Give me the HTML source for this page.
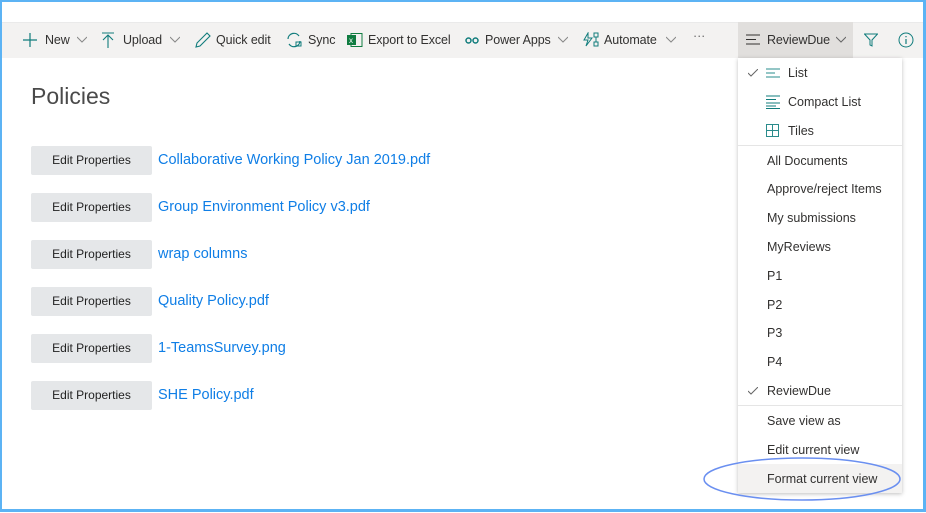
<!DOCTYPE html>
<html><head><meta charset="utf-8"><style>
*{margin:0;padding:0;box-sizing:border-box}
body{width:926px;height:513px;overflow:hidden;background:#fff;font-family:"Segoe UI","Liberation Sans",sans-serif;position:relative;color:#323130}
.frame{position:absolute;left:0;top:0;width:926px;height:512px;border:2px solid #5cb3f4;border-right-width:3px;border-bottom-width:3px}
.tb{position:absolute;left:2px;top:22px;width:921px;height:36px;background:#f3f2f1;border-top:1px solid #eaeaea}
.t{position:absolute;top:33px;font-size:12.5px;color:#323130;white-space:nowrap;letter-spacing:-0.1px}
.ic{position:absolute}
h1{position:absolute;left:31px;top:83px;font-size:23px;font-weight:300;color:#4a4a4a}
.btn{position:absolute;left:31px;width:121px;height:29px;background:#e5e7e9;border-radius:2px;font-size:12px;color:#222;text-align:center;line-height:29px}
.lnk{position:absolute;left:158px;font-size:14.5px;color:#0f7ee6;line-height:29px}
.menu{position:absolute;left:738px;top:58px;width:164px;height:435px;background:#fff;box-shadow:0 1px 4px rgba(0,0,0,.25);}
.mi{position:absolute;left:29px;font-size:12.5px;color:#323130;white-space:nowrap;margin-top:1px}
.div{position:absolute;left:0;width:164px;height:1px;background:#e5e5e5}
</style></head><body>
<div class="tb"></div>
<div style="position:absolute;left:738px;top:22px;width:115px;height:36px;background:#e1dfdd"></div>
<svg class="ic" style="left:23px;top:33px" width="14" height="14"><path d="M7 0V14M0 7H14" stroke="#107c7c" stroke-width="1.2"/></svg>
<div class="t" style="left:45px">New</div>
<svg class="ic" style="left:77px;top:36px" width="10" height="7"><path d="M0 1L5 6L10 1" stroke="#888" fill="none"/></svg>
<svg class="ic" style="left:102px;top:32px" width="12" height="16"><path d="M0 1H12M6 3V16M1 8L6 3L11 8" stroke="#107c7c" fill="none" stroke-width="1.1"/></svg>
<div class="t" style="left:123px">Upload</div>
<svg class="ic" style="left:170px;top:36px" width="10" height="7"><path d="M0 1L5 6L10 1" stroke="#888" fill="none"/></svg>
<svg class="ic" style="left:195px;top:32px" width="16" height="16"><path d="M1 15L2 11L12 1L15 4L5 14Z" stroke="#107c7c" fill="none" stroke-width="1.1"/></svg>
<div class="t" style="left:216px">Quick edit</div>
<svg class="ic" style="left:286px;top:32px" width="16" height="16"><path d="M2 7A6 6 0 0 1 13 4M14 9A6 6 0 0 1 3 12" stroke="#107c7c" fill="none" stroke-width="1.2"/><rect x="10" y="10" width="5" height="4" stroke="#107c7c" fill="none"/></svg>
<div class="t" style="left:308px">Sync</div>
<svg class="ic" style="left:347px;top:33px" width="16" height="14"><rect x="4" y="0.5" width="11" height="13" fill="none" stroke="#107c41"/><rect x="0" y="2" width="9" height="10" fill="#107c41"/><text x="2" y="10" font-size="8" fill="#fff" font-family="Liberation Sans">x</text></svg>
<div class="t" style="left:368px">Export to Excel</div>
<svg class="ic" style="left:465px;top:36px" width="14" height="9"><circle cx="3.5" cy="4.5" r="2.5" fill="none" stroke="#107c7c" stroke-width="1.5"/><circle cx="10.5" cy="4.5" r="2.5" fill="none" stroke="#107c7c" stroke-width="1.5"/></svg>
<div class="t" style="left:485px">Power Apps</div>
<svg class="ic" style="left:558px;top:36px" width="10" height="7"><path d="M0 1L5 6L10 1" stroke="#888" fill="none"/></svg>
<svg class="ic" style="left:583px;top:32px" width="16" height="16"><path d="M5 1L1 8H5L3 14L9 6H5Z" stroke="#107c7c" fill="none"/><rect x="11" y="1" width="4" height="4" stroke="#107c7c" fill="none"/><rect x="11" y="10" width="4" height="4" stroke="#107c7c" fill="none"/><path d="M13 5V10" stroke="#107c7c"/></svg>
<div class="t" style="left:604px">Automate</div>
<svg class="ic" style="left:666px;top:36px" width="10" height="7"><path d="M0 1L5 6L10 1" stroke="#888" fill="none"/></svg>
<div class="t" style="left:693px;top:29px;color:#666">···</div>
<svg class="ic" style="left:746px;top:34px" width="14" height="11"><path d="M0 1H14M0 5.5H10M0 10H14" stroke="#323130"/></svg>
<div class="t" style="left:767px">ReviewDue</div>
<svg class="ic" style="left:836px;top:36px" width="10" height="7"><path d="M0 1L5 6L10 1" stroke="#666" fill="none"/></svg>
<svg class="ic" style="left:864px;top:33px" width="14" height="14"><path d="M0.5 1H13.5L8 7V13L6 12V7Z" stroke="#107c7c" fill="none"/></svg>
<svg class="ic" style="left:898px;top:32px" width="16" height="16"><circle cx="8" cy="8" r="7" stroke="#107c7c" fill="none"/><path d="M8 7V12M8 4V5.3" stroke="#107c7c" stroke-width="1.2"/></svg>

<h1>Policies</h1>
<div class="btn" style="top:146px">Edit Properties</div><div class="lnk" style="top:146px">Collaborative Working Policy Jan 2019.pdf</div>
<div class="btn" style="top:193px">Edit Properties</div><div class="lnk" style="top:193px">Group Environment Policy v3.pdf</div>
<div class="btn" style="top:240px">Edit Properties</div><div class="lnk" style="top:240px">wrap columns</div>
<div class="btn" style="top:287px">Edit Properties</div><div class="lnk" style="top:287px">Quality Policy.pdf</div>
<div class="btn" style="top:334px">Edit Properties</div><div class="lnk" style="top:334px">1-TeamsSurvey.png</div>
<div class="btn" style="top:381px">Edit Properties</div><div class="lnk" style="top:381px">SHE Policy.pdf</div>

<div class="menu">
<div style="position:absolute;left:0;top:406px;width:164px;height:29px;background:#f3f2f1"></div>
<svg class="ic" style="left:10px;top:11px" width="10" height="8"><path d="M0 4L3 7L10 0" stroke="#666" fill="none"/></svg>
<svg class="ic" style="left:28px;top:10px" width="14" height="10"><path d="M0 1H14M0 5H9M0 9H14" stroke="#2a8c8c"/></svg>
<div class="mi" style="left:50px;top:7px">List</div>
<svg class="ic" style="left:28px;top:37px" width="14" height="14"><path d="M0 1H14M0 4.5H10M0 8H14M0 11H10M0 13.5H14" stroke="#107c7c"/></svg>
<div class="mi" style="left:50px;top:36px">Compact List</div>
<svg class="ic" style="left:28px;top:66px" width="13" height="13"><rect x=".5" y=".5" width="12" height="12" fill="none" stroke="#2a8c8c"/><path d="M6.5 0V13M0 6.5H13" stroke="#2a8c8c"/></svg>
<div class="mi" style="left:50px;top:65px">Tiles</div>
<div class="div" style="top:87px"></div>
<div class="mi" style="top:95px">All Documents</div>
<div class="mi" style="top:123px">Approve/reject Items</div>
<div class="mi" style="top:152px">My submissions</div>
<div class="mi" style="top:181px">MyReviews</div>
<div class="mi" style="top:210px">P1</div>
<div class="mi" style="top:239px">P2</div>
<div class="mi" style="top:267px">P3</div>
<div class="mi" style="top:296px">P4</div>
<svg class="ic" style="left:10px;top:329px" width="10" height="8"><path d="M0 4L3 7L10 0" stroke="#666" fill="none"/></svg>
<div class="mi" style="top:325px">ReviewDue</div>
<div class="div" style="top:347px"></div>
<div class="mi" style="top:355px">Save view as</div>
<div class="mi" style="top:384px">Edit current view</div>
<div class="mi" style="top:413px">Format current view</div>
</div>
<svg class="ic" style="left:700px;top:455px" width="210" height="50"><ellipse cx="102" cy="24" rx="98" ry="21" fill="none" stroke="#6a8ff0" stroke-width="1.5"/></svg>
<div class="frame"></div>
</body></html>
